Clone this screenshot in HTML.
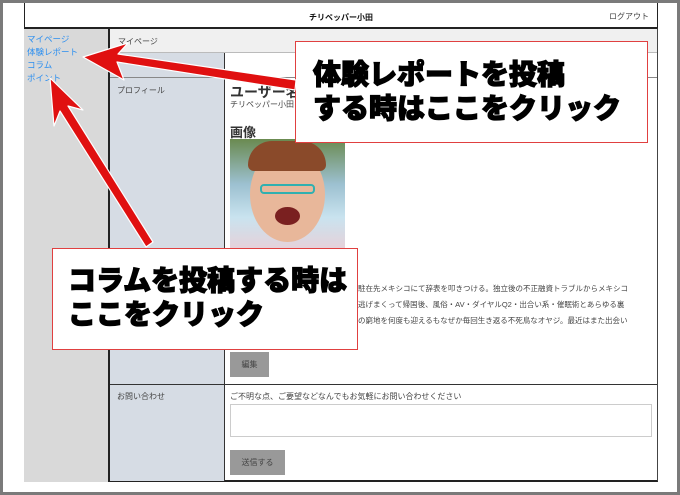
<!DOCTYPE html>
<html><head><meta charset="utf-8"><style>
*{margin:0;padding:0;box-sizing:border-box}
body{width:680px;height:495px;background:#fff;font-family:"Liberation Sans","Noto Sans CJK JP",sans-serif;position:relative;overflow:hidden}
.frame{position:absolute;inset:0;border:3px solid #7a7a7a}
.abs{position:absolute}
.hdr{left:24px;top:3px;width:634px;height:25px;border:1px solid #222;border-top:none;background:#fff;font-size:8px}
.side{left:24px;top:28px;width:86px;height:454px;background:#d9d9d9;border-right:2px solid #222;border-top:1px solid #222}
.side a{display:block;color:#2a8ef0;font-size:8.5px;margin-left:3px;line-height:13px;text-decoration:none}
.main{left:110px;top:28px;width:548px;height:454px;border-right:1px solid #444;border-bottom:2px solid #222;border-top:1px solid #222}
.crumb{height:24px;background:#f0f0f0;border-bottom:1px solid #bbb;font-size:8px;color:#444;padding:7px 8px}
.lab{background:#d6dce4;font-size:8px;color:#444}
.callout{background:#fff;border:1.5px solid #e04040;font-weight:900;color:#000;font-size:28px;line-height:34px;-webkit-text-stroke:1.2px #000;white-space:nowrap}
.btn{background:#999;color:#444;font-size:8px;text-align:center}
</style></head><body>
<div class="abs hdr"><div style="position:absolute;left:0;right:0;top:9px;text-align:center;font-weight:bold;color:#111">チリペッパー小田</div><div style="position:absolute;right:8px;top:8px;color:#444">ログアウト</div></div>
<div class="abs side"><div style="height:4px"></div><a>マイページ</a><a>体験レポート</a><a>コラム</a><a>ポイント</a></div>
<div class="abs main">
<div class="crumb">マイページ</div>
<div class="abs lab" style="left:0;top:24px;width:115px;height:428px"></div>
<div class="abs" style="left:0;top:48px;width:547px;border-top:1px solid #888"></div>
<div class="abs" style="left:114px;top:24px;height:428px;border-left:1px solid #333"></div>
<div class="abs" style="left:0;top:355px;width:547px;border-top:1px solid #333"></div>
<div class="abs lab" style="left:7px;top:56px">プロフィール</div>
<div class="abs lab" style="left:7px;top:362px;background:none">お問い合わせ</div>
<div class="abs" style="left:120px;top:53px;font-size:14px;font-weight:bold;color:#333">ユーザー名</div>
<div class="abs" style="left:120px;top:70px;font-size:8px;color:#444">チリペッパー小田</div>
<div class="abs" style="left:120px;top:93px;font-size:13px;font-weight:bold;color:#333">画像</div>
<div class="abs" style="left:120px;top:110px;width:115px;height:112px;background:linear-gradient(180deg,#6a8a50 0%,#9cc0d0 40%,#c9e3ef 70%,#e8d0d8 100%);overflow:hidden">
<div class="abs" style="left:20px;top:8px;width:75px;height:95px;border-radius:50%;background:#e8b79a"></div>
<div class="abs" style="left:18px;top:2px;width:78px;height:30px;border-radius:40px 40px 10px 10px;background:#8a4a2a"></div>
<div class="abs" style="left:30px;top:45px;width:55px;height:10px;border:2px solid #30b0b0;border-radius:4px"></div>
<div class="abs" style="left:45px;top:68px;width:25px;height:18px;border-radius:50%;background:#7a2020"></div>
</div>
<div class="abs" style="left:248px;top:252px;width:295px;font-size:7.5px;color:#444;line-height:16px">駐在先メキシコにて辞表を叩きつける。独立後の不正融資トラブルからメキシコ<br>逃げまくって帰国後、風俗・AV・ダイヤルQ2・出合い系・催眠術とあらゆる裏<br>の窮地を何度も迎えるもなぜか毎回生き返る不死鳥なオヤジ。最近はまた出会い</div>
<div class="abs btn" style="left:120px;top:323px;width:39px;height:25px;line-height:25px">編集</div>
<div class="abs" style="left:120px;top:362px;font-size:8px;color:#444">ご不明な点、ご要望などなんでもお気軽にお問い合わせください</div>
<div class="abs" style="left:120px;top:375px;width:422px;height:33px;border:1px solid #ccc;background:#fff"></div>
<div class="abs btn" style="left:120px;top:421px;width:55px;height:25px;line-height:25px">送信する</div>
</div>
<div class="abs callout" style="left:295px;top:41px;width:353px;height:102px;padding:16px 0 0 17px">体験レポートを投稿<br>する時はここをクリック</div>
<div class="abs callout" style="left:52px;top:248px;width:306px;height:102px;padding:15px 0 0 15px">コラムを投稿する時は<br>ここをクリック</div>
<svg class="abs" style="left:0;top:0" width="680" height="495">
<g fill="#e01010" stroke="#fff" stroke-width="1.2" stroke-linejoin="round">
<polygon points="83,57 128,43 118,54 296,80 295,90 117,62 124,80"/>
<polygon points="50,78 83,110 68,106 153,242 146,247 60,111 54,126"/>
</g></svg>
<div class="frame"></div>
</body></html>
